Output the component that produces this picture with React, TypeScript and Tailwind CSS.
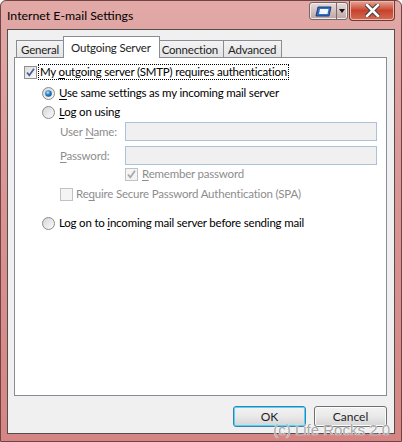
import React from "react";

const font = { fontFamily: 'Lato, "Segoe UI", sans-serif' };

const Check = ({ checked, disabled }: { checked?: boolean; disabled?: boolean }) => (
  <div
    className={`w-[13px] h-[13px] shrink-0 border flex items-center justify-center ${
      disabled ? "border-[#c2c2c2] bg-[#f4f4f4]" : "border-[#8e8f8f] bg-gradient-to-br from-[#dcdcdc] to-[#fbfbfb]"
    }`}
  >
    {checked && (
      <svg width="11" height="11" viewBox="0 0 11 11">
        <path
          d="M2 5.5 L4.3 8.3 L9 1.8"
          fill="none"
          stroke={disabled ? "#a8a8a8" : "#4c5f95"}
          strokeWidth="1.7"
        />
      </svg>
    )}
  </div>
);

const Radio = ({ checked }: { checked?: boolean }) => (
  <svg width="13" height="13" viewBox="0 0 13 13" className="shrink-0">
    <defs>
      <linearGradient id="rb" x1="0" y1="0" x2="1" y2="1">
        <stop offset="0" stopColor="#d4d4d4" />
        <stop offset="1" stopColor="#fdfdfd" />
      </linearGradient>
      <radialGradient id="rd" cx="0.4" cy="0.35" r="0.7">
        <stop offset="0" stopColor="#c9ecff" />
        <stop offset="0.45" stopColor="#2d8bd0" />
        <stop offset="1" stopColor="#0d4f8b" />
      </radialGradient>
    </defs>
    <circle cx="6.5" cy="6.5" r="6" fill="url(#rb)" stroke="#8a8a8a" strokeWidth="1" />
    {checked && <circle cx="6.5" cy="6.5" r="3.3" fill="url(#rd)" />}
  </svg>
);

const U = ({ children }: { children: React.ReactNode }) => <span className="underline underline-offset-2">{children}</span>;

const Tab = ({ label, active }: { label: string; active?: boolean }) => (
  <div
    className={
      active
        ? "relative z-10 h-[22px] -mx-[2px] pl-[7px] pr-[8px] bg-white border border-b-0 border-[#898c95] flex items-start pt-[2px] text-[11.5px] tracking-[-0.2px]"
        : "h-[18px] pl-[4px] pr-[5px] bg-gradient-to-b from-[#f3f3f3] to-[#e3e3e3] border border-b-0 border-[#898c95] flex items-start text-[11.5px] tracking-[-0.2px] -ml-px first:ml-0"
    }
  >
    {label}
  </div>
);

const Btn = ({ label, primary }: { label: string; primary?: boolean }) => (
  <div
    className={`w-[73px] h-[21px] rounded-[3px] border flex items-center justify-center text-[12px] bg-gradient-to-b from-[#f2f2f2] via-[#e9e9e9] to-[#d4d4d4] ${
      primary ? "border-[#3c7fb1] shadow-[inset_0_0_0_1px_#48d8fb]" : "border-[#707070] shadow-[inset_0_0_0_1px_#fcfcfc]"
    }`}
  >
    {label}
  </div>
);

export default function App() {
  return (
    <div
      style={font}
      className="relative w-[402px] h-[442px] overflow-hidden rounded-t-[6px] border border-[#6e4444] bg-gradient-to-b from-[#e2a9a6] via-[#d99391] to-[#d58684] text-[#1e1e1e] flex flex-col"
    >
      {/* title bar */}
      <div className="h-[28px] flex items-start">
        <div className="pl-[6px] pt-[6px] text-[12.3px] text-black">Internet E-mail Settings</div>
        <div className="ml-auto flex items-start">
          <div className="mt-[1px] flex h-[18px] rounded-[3px] border border-[#6b6b6b] bg-gradient-to-b from-[#eadada] to-[#bfa4a4] shadow-[inset_0_0_0_1px_#f5e8e8]">
            <div className="w-[27px] flex items-center justify-center border-r border-[#7a6a6a]">
              <svg width="17" height="11" viewBox="0 0 17 11">
                <path d="M3 1 H16 L14 10 H1 Z" fill="#2f6fc0" stroke="#1c3e78" />
                <path d="M5 3 H13.5 L12.5 8 H4 Z" fill="#f2f6ff" />
              </svg>
            </div>
            <div className="w-[10px] flex items-center justify-center">
              <svg width="6" height="4" viewBox="0 0 6 4">
                <path d="M0 0 H6 L3 4 Z" fill="#111" />
              </svg>
            </div>
          </div>
          <div className="ml-[1px] mr-[6px] w-[46px] h-[20px] rounded-b-[4px] border border-t-0 border-[#6b3a34] bg-gradient-to-b from-[#e7a596] via-[#c6422c] to-[#d56b54] shadow-[inset_0_0_0_1px_#f0b7aa] flex items-center justify-center">
            <svg width="15" height="13" viewBox="0 0 15 13">
              <path d="M2 1 L13 12 M13 1 L2 12" stroke="#3a3a3a" strokeWidth="4.5" strokeLinecap="square" />
              <path d="M2 1 L13 12 M13 1 L2 12" stroke="#ffffff" strokeWidth="2.6" strokeLinecap="square" />
            </svg>
          </div>
        </div>
      </div>

      {/* client area */}
      <div className="mx-[6px] h-[405px] bg-[#f0f0f0] border border-[#4f4f4f] flex flex-col">
        <div className="pt-[6px] pl-[8px] flex items-end -mb-px">
          <Tab label="General" />
          <Tab label="Outgoing Server" active />
          <Tab label="Connection" />
          <Tab label="Advanced" />
        </div>
        <div className="ml-[6px] mr-[7px] h-[339px] bg-white border border-[#898c95] flex flex-col text-[11.5px] tracking-[-0.2px] whitespace-nowrap">
          <div className="mt-[6px] ml-[9px] h-[16px] flex items-center">
            <Check checked />
            <span className="ml-[1px] px-[1px] border border-dotted border-black leading-[14px] text-black">
              My <U>o</U>utgoing server (SMTP) requires authentication
            </span>
          </div>
          <div className="mt-[5px] ml-[27px] h-[16px] flex items-center gap-[4px] text-black">
            <Radio checked />
            <span>
              <U>U</U>se same settings as my incoming mail server
            </span>
          </div>
          <div className="mt-[3px] ml-[27px] h-[16px] flex items-center gap-[4px] text-black">
            <Radio />
            <span>
              <U>L</U>og on using
            </span>
          </div>
          <div className="mt-[2px] ml-[45px] h-[19px] flex items-center text-[#8d8d8d]">
            <span className="w-[65px]">
              User <U>N</U>ame:
            </span>
            <div className="w-[252px] h-[19px] bg-[#f0f0f0] border border-[#abc1de]" />
          </div>
          <div className="mt-[5px] ml-[45px] h-[19px] flex items-center text-[#8d8d8d]">
            <span className="w-[65px]">
              <U>P</U>assword:
            </span>
            <div className="w-[252px] h-[19px] bg-[#f0f0f0] border border-[#abc1de]" />
          </div>
          <div className="mt-[1px] ml-[110px] h-[16px] flex items-center gap-[4px] text-[#8d8d8d]">
            <Check checked disabled />
            <span>
              <U>R</U>emember password
            </span>
          </div>
          <div className="mt-[4px] ml-[45px] h-[16px] flex items-center gap-[3px] text-[#8d8d8d]">
            <Check disabled />
            <span>
              Re<U>q</U>uire Secure Password Authentication (SPA)
            </span>
          </div>
          <div className="mt-[13px] ml-[27px] h-[16px] flex items-center gap-[4px] text-black">
            <Radio />
            <span>
              Log on to <U>i</U>ncoming mail server before sending mail
            </span>
          </div>
        </div>
        <div className="mt-[10px] mr-[7px] flex justify-end gap-[8px]">
          <Btn label="OK" primary />
          <Btn label="Cancel" />
        </div>
      </div>

      <div
        style={{ fontFamily: '"Liberation Sans", sans-serif' }}
        className="absolute right-[11px] bottom-[0px] text-[15px] text-[#a6a6a6] [text-shadow:0_0_1px_#ffffff,0_0_1px_#ffffff]"
      >
        (c) Life Rocks 2.0
      </div>
    </div>
  );
}
